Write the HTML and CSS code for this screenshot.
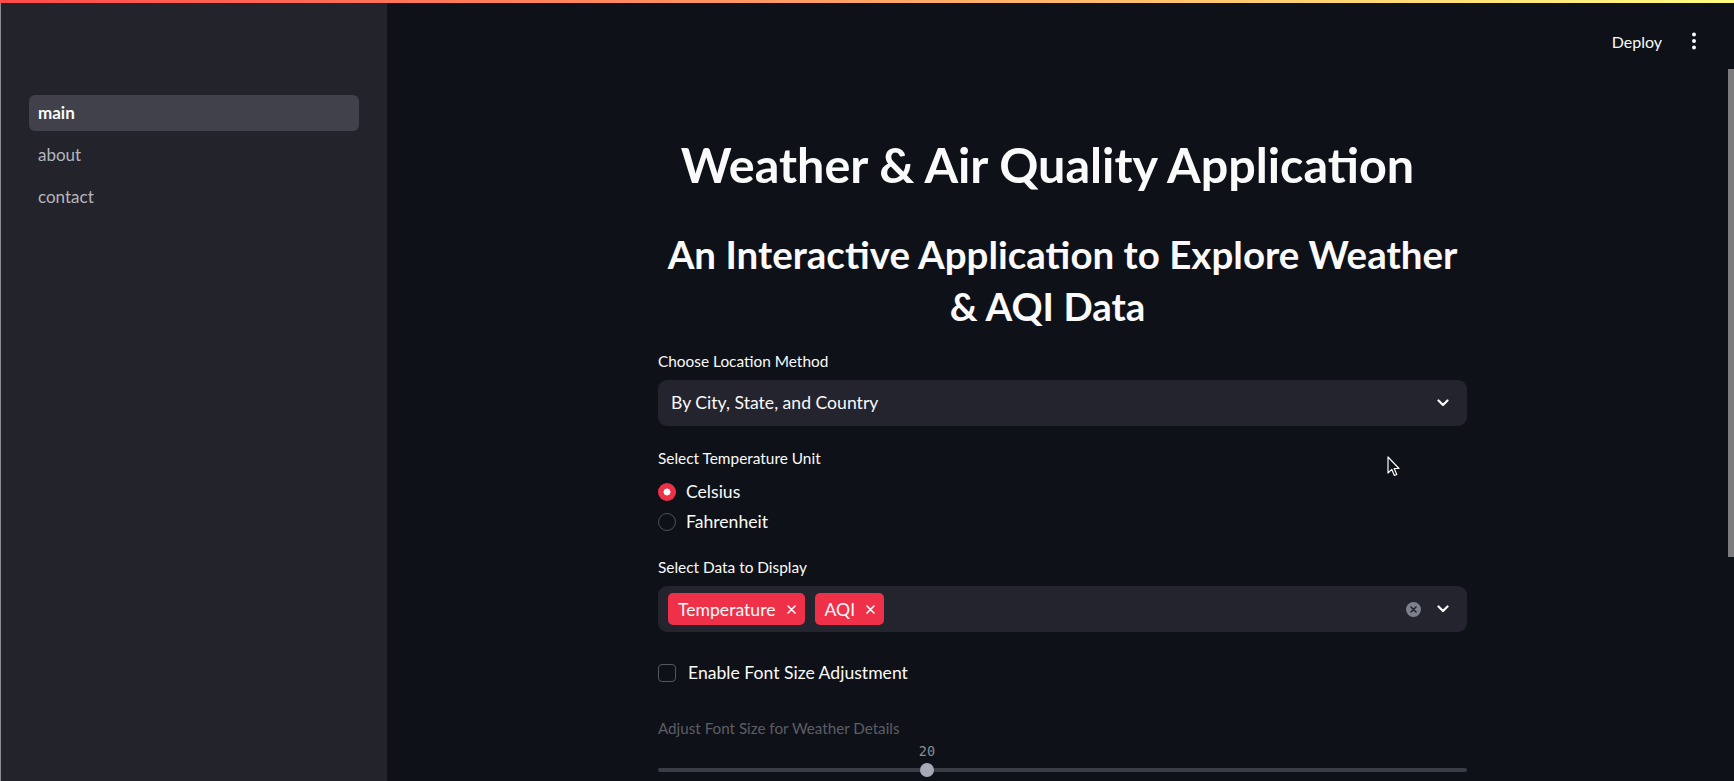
FILE: index.html
```html
<!DOCTYPE html>
<html lang="en">
<head>
<meta charset="utf-8">
<title>Weather &amp; Air Quality Application</title>
<link rel="stylesheet" href="styles.css">
</head>
<body>
<div class="decoration"></div>
<div class="app">
  <aside class="sidebar">
    <nav class="nav">
      <a class="nav-item active">main</a>
      <a class="nav-item">about</a>
      <a class="nav-item">contact</a>
    </nav>
  </aside>
  <main class="main">
    <header class="header">
      <span class="deploy">Deploy</span>
      <svg class="menu" width="4" height="18" viewBox="0 0 4 18"><circle cx="2" cy="2.5" r="2" fill="#fafafa"/><circle cx="2" cy="9" r="2" fill="#fafafa"/><circle cx="2" cy="15.5" r="2" fill="#fafafa"/></svg>
    </header>
    <div class="content">
      <h1 class="title">Weather &amp; Air Quality Application<span class="anchor"></span></h1>
      <h2 class="subtitle">An Interactive Application to Explore Weather<br>&amp; AQI Data<span class="anchor"></span></h2>

      <div class="widget-label">Choose Location Method</div>
      <div class="select">
        <span class="select-value">By City, State, and Country</span>
        <svg class="chevron" width="12" height="8" viewBox="0 0 12 8"><polyline points="1.5,1.5 6,6 10.5,1.5" fill="none" stroke="#fafafa" stroke-width="2.2" stroke-linecap="round" stroke-linejoin="round"/></svg>
      </div>

      <div class="widget-label label-gap">Select Temperature Unit</div>
      <div class="radio-group">
        <div class="radio-row"><span class="radio checked"></span><span class="radio-text">Celsius</span></div>
        <div class="radio-row"><span class="radio"></span><span class="radio-text">Fahrenheit</span></div>
      </div>

      <div class="widget-label label-gap2">Select Data to Display</div>
      <div class="multiselect">
        <div class="tags">
          <span class="tag">Temperature<svg class="tag-x" width="9" height="9" viewBox="0 0 9 9"><path d="M1 1 L8 8 M8 1 L1 8" stroke="#fafafa" stroke-width="1.6" stroke-linecap="round"/></svg></span>
          <span class="tag">AQI<svg class="tag-x" width="9" height="9" viewBox="0 0 9 9"><path d="M1 1 L8 8 M8 1 L1 8" stroke="#fafafa" stroke-width="1.6" stroke-linecap="round"/></svg></span>
        </div>
        <div class="ms-icons">
          <svg class="clear" width="15" height="15" viewBox="0 0 15 15"><circle cx="7.5" cy="7.5" r="7.5" fill="#7d808d"/><path d="M5 5 L10 10 M10 5 L5 10" stroke="#23242d" stroke-width="1.6" stroke-linecap="round"/></svg>
          <svg class="chevron" width="12" height="8" viewBox="0 0 12 8"><polyline points="1.5,1.5 6,6 10.5,1.5" fill="none" stroke="#fafafa" stroke-width="2.2" stroke-linecap="round" stroke-linejoin="round"/></svg>
        </div>
      </div>

      <div class="checkbox-row"><span class="checkbox"></span><span class="checkbox-text">Enable Font Size Adjustment</span></div>

      <div class="widget-label disabled">Adjust Font Size for Weather Details</div>
      <div class="slider">
        <span class="slider-value" style="left: 33.25%">20</span>
        <div class="track"></div>
        <span class="thumb" style="left: 33.25%"></span>
      </div>
    </div>
    <div class="scrollbar"></div>
    <svg class="cursor" width="13" height="21" viewBox="0 0 13 21"><path d="M1 1 L1 17 L4.8 13.4 L7.4 19.5 L9.8 18.5 L7.2 12.5 L12 12.5 Z" fill="#0e1117" stroke="#fafafa" stroke-width="1.2" stroke-linejoin="round"/></svg>
  </main>
</div>
</body>
</html>
```

FILE: styles.css
```css
* { box-sizing: border-box; }

html, body {
  margin: 0;
  padding: 0;
  width: 1734px;
  height: 781px;
  overflow: hidden;
  background: #0e1117;
  font-family: "Lato", "Noto Sans", sans-serif;
  color: #fafafa;
}

.decoration {
  height: 3px;
  background: linear-gradient(90deg, #ff4b4b, #fffd80);
}

.app {
  display: flex;
  height: 778px;
}

.sidebar {
  width: 387px;
  flex: none;
  background: #22232b;
  border-left: 1px solid #8a8b90;
  padding: 92px 28px 0 28px;
}

.nav {
  display: flex;
  flex-direction: column;
  gap: 6px;
}

.nav-item {
  display: block;
  height: 36px;
  line-height: 36px;
  padding-left: 9px;
  border-radius: 6px;
  font-size: 17px;
  color: #b5b7bd;
}

.nav-item.active {
  background: #40414b;
  color: #fafafa;
  font-weight: 700;
}

.main {
  flex: 1;
  position: relative;
  padding-left: 4px;
}

.header {
  height: 80px;
  display: flex;
  justify-content: flex-end;
  align-items: center;
  padding: 0 38px 4px 0;
}

.deploy {
  font-size: 16px;
  color: #fafafa;
}

.menu {
  margin-left: 30px;
  display: block;
}

.content {
  width: 809px;
  margin: 0 auto;
}

.title {
  margin: 53px 0 0 0;
  font-size: 48.5px;
  line-height: 56px;
  font-weight: 700;
  text-align: center;
}

.subtitle {
  margin: 36px 0 0 0;
  font-size: 38.5px;
  line-height: 52px;
  font-weight: 700;
  text-align: center;
}

.anchor {
  display: inline-block;
  width: 30px;
}

.widget-label {
  margin-top: 18px;
  font-size: 15.4px;
  line-height: 22px;
  color: #fafafa;
}

.label-gap { margin-top: 21px; }
.label-gap2 { margin-top: 19px; }

.widget-label.disabled {
  margin-top: 32px;
  font-size: 15.2px;
  color: #5c5e66;
}

.select {
  margin-top: 8px;
  height: 46px;
  background: #23242d;
  border-radius: 9px;
  display: flex;
  align-items: center;
  justify-content: space-between;
  padding: 0 18px 0 13px;
}

.select-value {
  font-size: 17.6px;
  line-height: 22px;
}

.chevron { display: block; }

.radio-group {
  margin-top: 8px;
  display: flex;
  flex-direction: column;
}

.radio-row {
  height: 30px;
  display: flex;
  align-items: center;
  gap: 10px;
}

.radio {
  width: 18px;
  height: 18px;
  border-radius: 50%;
  border: 1px solid #4f5159;
  flex: none;
}

.radio.checked {
  border: none;
  background: radial-gradient(circle, #fafafa 0 3.2px, #ee3049 3.8px);
}

.radio-text {
  font-size: 17.6px;
  line-height: 30px;
}

.multiselect {
  margin-top: 8px;
  height: 46px;
  background: #23242d;
  border-radius: 9px;
  display: flex;
  align-items: center;
  justify-content: space-between;
  padding: 0 18px 0 10px;
}

.tags {
  display: flex;
  gap: 10px;
}

.tag {
  height: 32px;
  display: flex;
  align-items: center;
  gap: 11px;
  padding: 0 9px 0 10px;
  background: #ee3049;
  border-radius: 5px;
  font-size: 17.6px;
}

.tag-x { display: block; }

.ms-icons {
  display: flex;
  align-items: center;
  gap: 16px;
}

.clear { display: block; }

.checkbox-row {
  margin-top: 29px;
  height: 24px;
  display: flex;
  align-items: center;
  gap: 12px;
}

.checkbox {
  width: 18px;
  height: 18px;
  border: 1px solid #555760;
  border-radius: 4px;
  flex: none;
}

.checkbox-text {
  font-size: 17.6px;
  line-height: 24px;
}

.slider {
  position: relative;
  margin-top: 6px;
  height: 35px;
}

.slider-value {
  position: absolute;
  top: -3px;
  transform: translateX(-50%);
  font-family: "DejaVu Sans Mono", monospace;
  font-size: 13.5px;
  line-height: 18px;
  color: #8a8c94;
}

.track {
  position: relative;
  top: 23px;
  height: 4px;
  border-radius: 2px;
  background: #3a3c46;
}

.thumb {
  position: absolute;
  top: 18px;
  width: 14px;
  height: 14px;
  margin-left: -7px;
  border-radius: 50%;
  background: #a6aab8;
}

.scrollbar {
  position: absolute;
  right: 0;
  top: 66px;
  width: 6px;
  height: 488px;
  background: #7c7c7e;
}

.cursor {
  position: absolute;
  left: 1000px;
  top: 453px;
}
```
